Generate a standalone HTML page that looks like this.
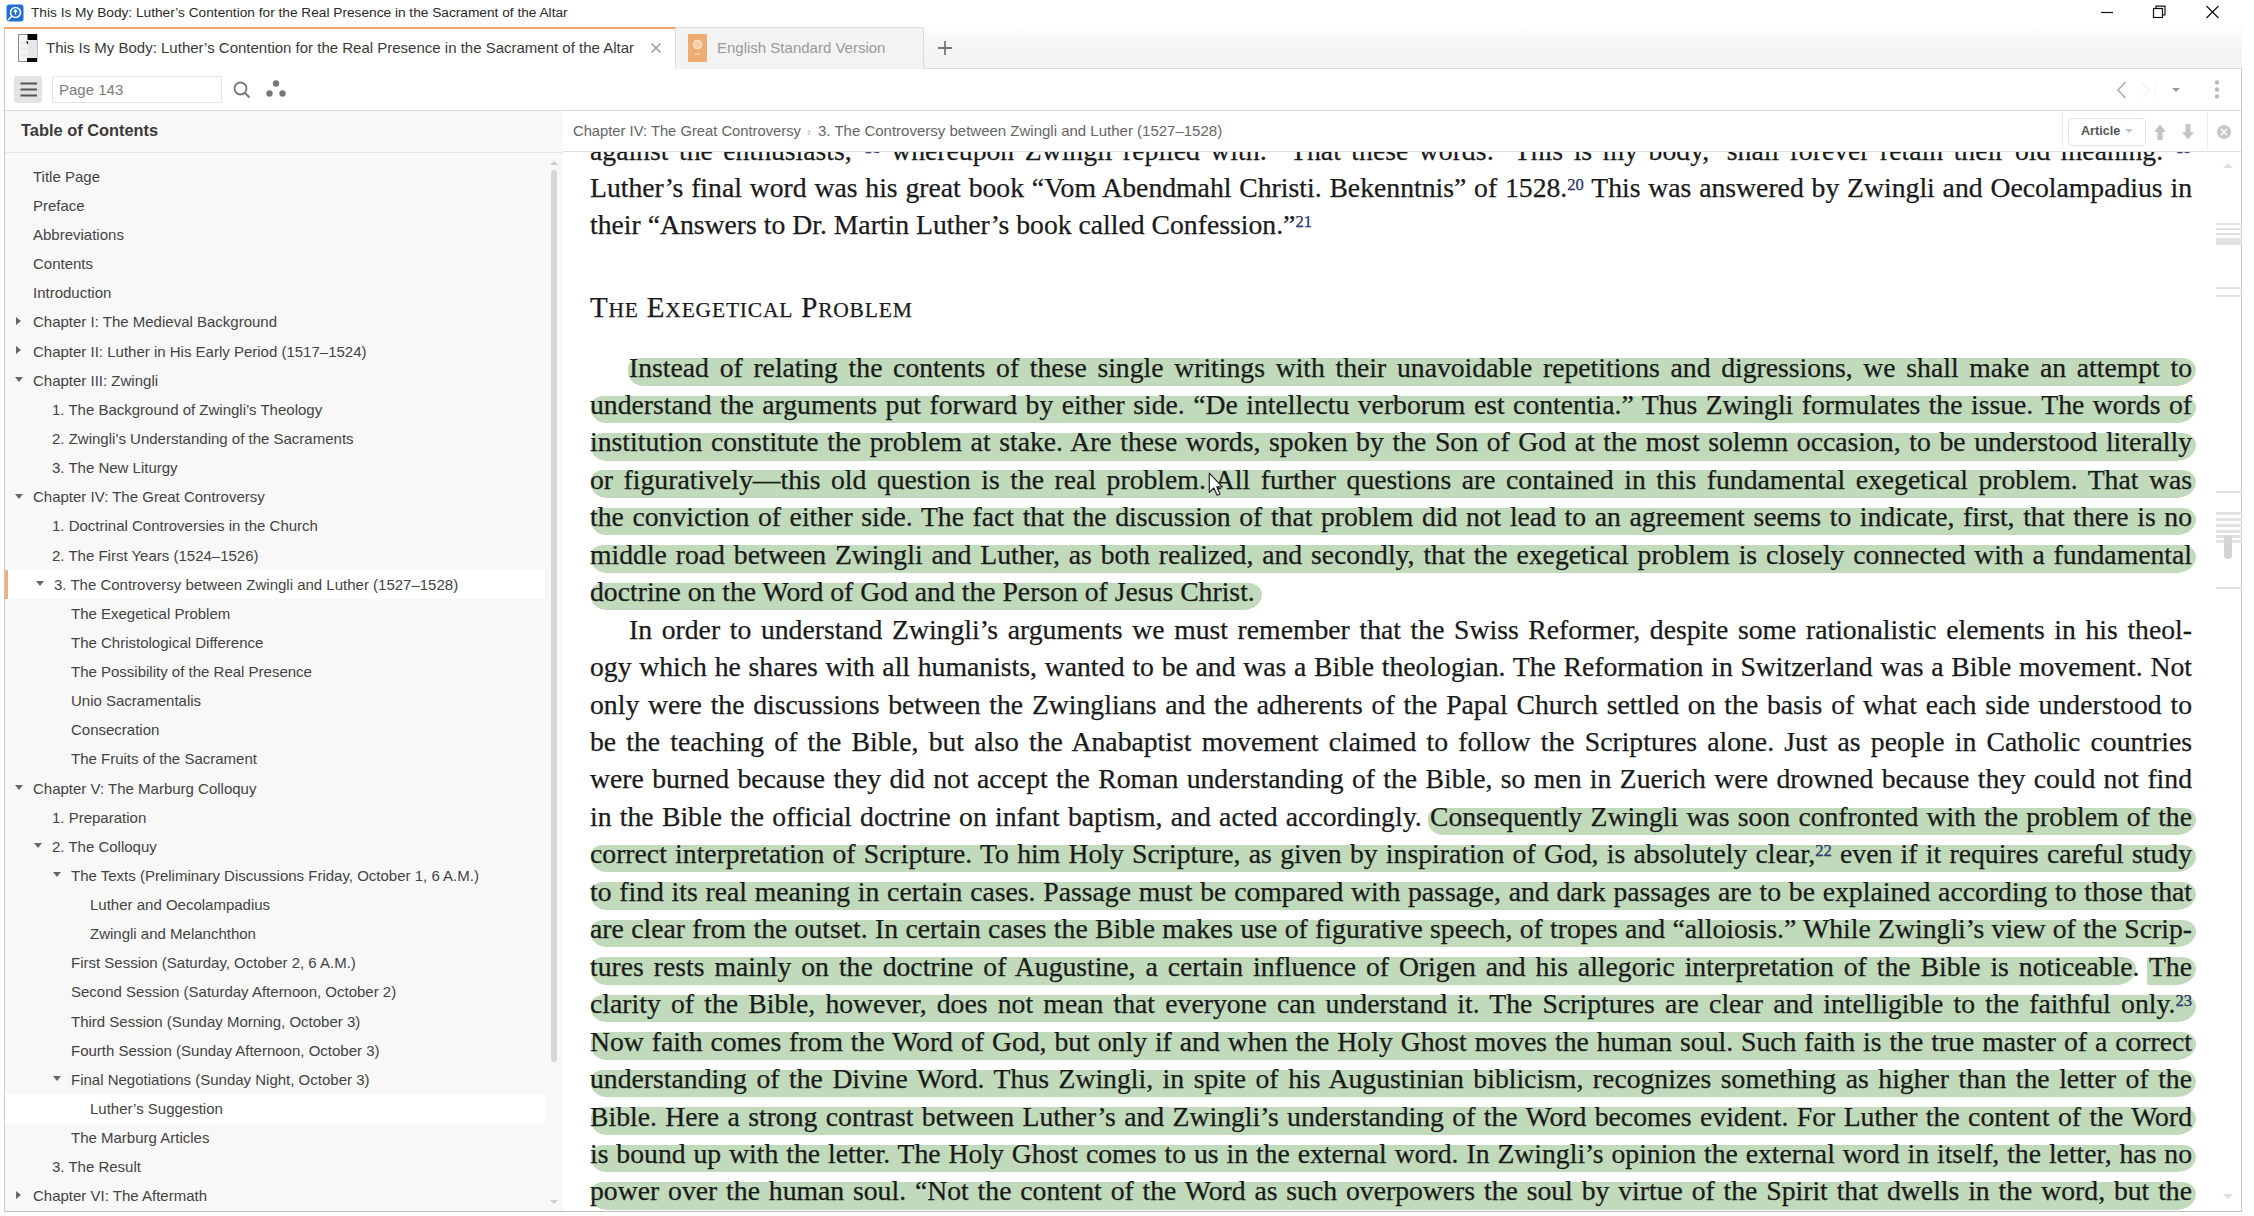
<!DOCTYPE html>
<html><head><meta charset="utf-8">
<style>
*{margin:0;padding:0;box-sizing:border-box}
html,body{width:2254px;height:1216px;overflow:hidden;background:#fff;position:relative;font-family:"Liberation Sans",sans-serif}
.a{position:absolute}
#titlebar{left:0;top:0;width:2254px;height:27px;background:#fff}
#ttl{left:31px;top:4px;font-size:13.7px;color:#2a2a2a;white-space:nowrap;line-height:18px}
#win{left:4px;top:27px;width:2238px;height:1185px;border-left:1px solid #c9c9c9;border-bottom:1px solid #bdbdbd}
#winr{left:2241px;top:68px;width:1px;height:1144px;background:#c9c9c9}
#tabstrip{left:5px;top:14px;width:2237px;height:55px;background:linear-gradient(#fff,#fff 8px,#f5f5f5 30px,#f4f4f4);border-bottom:1px solid #dcdcdc}
#tab1{left:5px;top:27px;width:670px;height:42px;background:#fff;border-top:2px solid #e9a56a}
#tab2{left:675px;top:27px;width:249px;height:42px;background:#f3f3f3;border:1px solid #dcdcdc;border-bottom:none}
.tabtxt{font-size:15px;white-space:nowrap;line-height:20px}
#toolbar{left:5px;top:69px;width:2236px;height:42px;background:#fff;border-bottom:1px solid #dadada}
#toc{left:5px;top:111px;width:558px;height:1100px;background:#f8f8f8}
#tochead{left:5px;top:111px;width:558px;height:42px;border-bottom:1px solid #e6e6e6;background:#f8f8f8}
#main{left:563px;top:111px;width:1678px;height:1100px;background:#fff}
#crumb{left:563px;top:111px;width:1678px;height:41px;background:#fff;border-bottom:1px solid #dedede;z-index:5}
.row{position:absolute;height:29.13px;line-height:29.13px;font-size:15px;color:#434343;white-space:nowrap}
.tri{position:absolute;width:0;height:0}
.tr{border-top:4px solid transparent;border-bottom:4px solid transparent;border-left:5px solid #666}
.td{border-left:4px solid transparent;border-right:4px solid transparent;border-top:5px solid #666}
</style><style>
.ln{position:absolute;font-family:"Liberation Serif",serif;font-size:27.7px;line-height:37.45px;color:#1a1a1a;white-space:nowrap;-webkit-text-stroke:0.25px #1a1a1a}
.ln.j{white-space:normal;text-align:justify;text-align-last:justify;height:37.45px;overflow:visible}
.ln sup{font-size:60%;vertical-align:0;position:relative;top:-0.42em;color:#2b3a8a;line-height:0}
.hd{font-size:29px;line-height:34px;letter-spacing:0.8px}
.hd small{font-size:21.5px}
.hl{position:absolute;height:27.5px;background:#c1dabb;border-radius:12px 14px 20px 16px/10px 12px 16px 14px;filter:blur(0.6px)}
</style></head><body>
<!-- title bar -->
<div class="a" id="titlebar"></div>
<div class="a" id="tabstrip"></div>
<svg class="a" style="left:6px;top:4px" width="18" height="18" viewBox="0 0 18 18"><rect x="0.5" y="0.5" width="17" height="17" rx="3" fill="#1f6fd0"/><circle cx="9.5" cy="8.5" r="5" fill="none" stroke="#fff" stroke-width="1.6"/><path d="M9.5 6 L9.5 10.5 M7.8 7.8 L9.5 6 L11.2 7.8" stroke="#fff" stroke-width="1.3" fill="none"/><path d="M6 12 L2 16" stroke="#fff" stroke-width="1.6"/></svg>
<div class="a" id="ttl">This Is My Body: Luther’s Contention for the Real Presence in the Sacrament of the Altar</div>
<svg class="a" style="left:2095px;top:0px" width="140" height="26" viewBox="0 0 140 26">
<path d="M6 12.5 H18" stroke="#111" stroke-width="1.2"/>
<rect x="58.5" y="8.5" width="9" height="9" fill="#fff" stroke="#111" stroke-width="1.2"/><path d="M61 8.5 V6.2 H70 V15 H67.5" fill="none" stroke="#111" stroke-width="1.2"/>
<path d="M111.5 6 L123.5 18 M123.5 6 L111.5 18" stroke="#111" stroke-width="1.2"/>
</svg>
<div class="a" id="win"></div><div class="a" id="winr"></div>
<!-- tab strip -->
<div class="a" id="tab1"></div>
<div class="a" id="tab2"></div>
<svg class="a" style="left:18px;top:34px" width="20" height="29" viewBox="0 0 20 29"><rect x="0.5" y="0.5" width="18.5" height="27" fill="#f4f4f4" stroke="#8a8a8a" stroke-width="1"/><rect x="9.5" y="6.5" width="9.5" height="17" fill="#e6e6ea"/><rect x="9.5" y="0" width="9.5" height="6" fill="#050505"/><rect x="9" y="24" width="10" height="4" fill="#0a0a0a"/><path d="M9 7 L9.5 10" stroke="#333" stroke-width="1.5"/><path d="M3 9 H9 M3 15 H9 M4 21 H9" stroke="#ddd" stroke-width="0.8"/></svg>
<div class="a tabtxt" style="left:46px;top:38px;color:#3a3a3a">This Is My Body: Luther’s Contention for the Real Presence in the Sacrament of the Altar</div>
<svg class="a" style="left:650px;top:42px" width="12" height="12" viewBox="0 0 12 12"><path d="M1.5 1.5 L10.5 10.5 M10.5 1.5 L1.5 10.5" stroke="#9a9a9a" stroke-width="1.5"/></svg>
<svg class="a" style="left:688px;top:34px" width="19" height="28" viewBox="0 0 19 28"><rect x="0" y="0" width="19" height="28" fill="#efab74"/><circle cx="9.5" cy="10.5" r="4.2" fill="#f6cfa6" stroke="#f8e2bf" stroke-width="1.2"/><path d="M7 20 h5" stroke="#f8d9b2" stroke-width="1.3"/></svg>
<div class="a tabtxt" style="left:717px;top:38px;color:#9a9a9a">English Standard Version</div>
<svg class="a" style="left:937px;top:40px" width="16" height="16" viewBox="0 0 16 16"><path d="M8 1 V15 M1 8 H15" stroke="#777" stroke-width="1.8"/></svg>
<!-- toolbar -->
<div class="a" id="toolbar"></div>
<div class="a" style="left:14px;top:76px;width:28px;height:27px;background:#e3e3e3;border-radius:3px"></div>
<svg class="a" style="left:14px;top:76px" width="28" height="27" viewBox="0 0 28 27"><path d="M6.5 7.5 H23 M6.5 13.5 H23 M6.5 19.5 H23" stroke="#555" stroke-width="2"/></svg>
<div class="a" style="left:52px;top:76px;width:170px;height:27px;border:1px solid #e2e2e2;border-radius:2px;background:#fff"></div>
<div class="a" style="left:59px;top:80px;font-size:15px;line-height:20px;color:#7c7c7c;white-space:nowrap">Page 143</div>
<svg class="a" style="left:230px;top:78px" width="22" height="22" viewBox="0 0 22 22"><circle cx="10.5" cy="10.5" r="6" fill="none" stroke="#777" stroke-width="1.8"/><path d="M14.8 14.8 L19.5 19.5" stroke="#777" stroke-width="2"/></svg>
<svg class="a" style="left:264px;top:78px" width="24" height="22" viewBox="0 0 24 22"><circle cx="12" cy="5.5" r="3.2" fill="#777"/><circle cx="5.5" cy="15.5" r="3.2" fill="#777"/><circle cx="18.5" cy="15.5" r="3.2" fill="#777"/></svg>
<svg class="a" style="left:2110px;top:76px" width="120" height="28" viewBox="0 0 120 28"><path d="M15.5 6 L8 14 L15.5 22" fill="none" stroke="#aaa" stroke-width="1.5"/><path d="M62 12 L70 12 L66 16 Z" fill="#999"/><circle cx="107" cy="6.5" r="2.2" fill="#bbb"/><circle cx="107" cy="13.5" r="2.2" fill="#bbb"/><circle cx="107" cy="20.5" r="2.2" fill="#bbb"/></svg>
<!-- TOC panel -->
<div class="a" id="toc"></div>
<div class="a" id="tochead"></div>
<div class="a" style="left:21px;top:119px;font-size:16.4px;font-weight:bold;color:#3a3a3a;line-height:22px;white-space:nowrap">Table of Contents</div>
<div class="row" style="left:33px;top:161.83px">Title Page</div>
<div class="row" style="left:33px;top:190.96px">Preface</div>
<div class="row" style="left:33px;top:220.09px">Abbreviations</div>
<div class="row" style="left:33px;top:249.22px">Contents</div>
<div class="row" style="left:33px;top:278.35px">Introduction</div>
<div class="row" style="left:33px;top:307.48px">Chapter I: The Medieval Background</div>
<div class="tri tr" style="left:16px;top:317.25px"></div>
<div class="row" style="left:33px;top:336.61px">Chapter II: Luther in His Early Period (1517–1524)</div>
<div class="tri tr" style="left:16px;top:346.38px"></div>
<div class="row" style="left:33px;top:365.74px">Chapter III: Zwingli</div>
<div class="tri td" style="left:15px;top:377.01px"></div>
<div class="row" style="left:52px;top:394.87px">1. The Background of Zwingli’s Theology</div>
<div class="row" style="left:52px;top:424.00px">2. Zwingli’s Understanding of the Sacraments</div>
<div class="row" style="left:52px;top:453.13px">3. The New Liturgy</div>
<div class="row" style="left:33px;top:482.26px">Chapter IV: The Great Controversy</div>
<div class="tri td" style="left:15px;top:493.53px"></div>
<div class="row" style="left:52px;top:511.39px">1. Doctrinal Controversies in the Church</div>
<div class="row" style="left:52px;top:540.52px">2. The First Years (1524–1526)</div>
<div class="a" style="left:5px;top:569.65px;width:540px;height:29.13px;background:#fff"></div>
<div class="a" style="left:5px;top:569.65px;width:3px;height:29.13px;background:#eeb07a"></div>
<div class="row" style="left:54px;top:569.65px">3. The Controversy between Zwingli and Luther (1527–1528)</div>
<div class="tri td" style="left:36px;top:580.92px"></div>
<div class="row" style="left:71px;top:598.78px">The Exegetical Problem</div>
<div class="row" style="left:71px;top:627.91px">The Christological Difference</div>
<div class="row" style="left:71px;top:657.04px">The Possibility of the Real Presence</div>
<div class="row" style="left:71px;top:686.17px">Unio Sacramentalis</div>
<div class="row" style="left:71px;top:715.30px">Consecration</div>
<div class="row" style="left:71px;top:744.43px">The Fruits of the Sacrament</div>
<div class="row" style="left:33px;top:773.56px">Chapter V: The Marburg Colloquy</div>
<div class="tri td" style="left:15px;top:784.83px"></div>
<div class="row" style="left:52px;top:802.69px">1. Preparation</div>
<div class="row" style="left:52px;top:831.82px">2. The Colloquy</div>
<div class="tri td" style="left:34px;top:843.09px"></div>
<div class="row" style="left:71px;top:860.95px">The Texts (Preliminary Discussions Friday, October 1, 6 A.M.)</div>
<div class="tri td" style="left:53px;top:872.22px"></div>
<div class="row" style="left:90px;top:890.08px">Luther and Oecolampadius</div>
<div class="row" style="left:90px;top:919.21px">Zwingli and Melanchthon</div>
<div class="row" style="left:71px;top:948.34px">First Session (Saturday, October 2, 6 A.M.)</div>
<div class="row" style="left:71px;top:977.47px">Second Session (Saturday Afternoon, October 2)</div>
<div class="row" style="left:71px;top:1006.60px">Third Session (Sunday Morning, October 3)</div>
<div class="row" style="left:71px;top:1035.73px">Fourth Session (Sunday Afternoon, October 3)</div>
<div class="row" style="left:71px;top:1064.86px">Final Negotiations (Sunday Night, October 3)</div>
<div class="tri td" style="left:53px;top:1076.13px"></div>
<div class="a" style="left:5px;top:1093.99px;width:540px;height:29.13px;background:#fff"></div>
<div class="row" style="left:90px;top:1093.99px">Luther’s Suggestion</div>
<div class="row" style="left:71px;top:1123.12px">The Marburg Articles</div>
<div class="row" style="left:52px;top:1152.25px">3. The Result</div>
<div class="row" style="left:33px;top:1181.38px">Chapter VI: The Aftermath</div>
<div class="tri tr" style="left:16px;top:1191.15px"></div>
<div class="a" style="left:551px;top:170px;width:6px;height:892px;background:#d6d6d6;border-radius:3px"></div>
<svg class="a" style="left:549px;top:160px" width="10" height="6"><path d="M1 5 L5 1 L9 5Z" fill="#ccc"/></svg>
<svg class="a" style="left:549px;top:1199px" width="10" height="6"><path d="M1 1 L5 5 L9 1Z" fill="#ccc"/></svg>
<!-- main -->
<div class="a" id="main"></div>
<div class="a" id="crumb"></div>
<div class="a" style="left:573px;top:121px;font-size:14.75px;line-height:20px;color:#666;white-space:nowrap;z-index:6">Chapter IV: The Great Controversy</div>
<div class="a" style="left:807px;top:122px;font-size:12px;line-height:20px;color:#b0b0b0;white-space:nowrap;z-index:6">›</div>
<div class="a" style="left:818px;top:121px;font-size:15px;line-height:20px;color:#666;white-space:nowrap;z-index:6">3. The Controversy between Zwingli and Luther (1527–1528)</div>
<div class="a" style="left:2062px;top:112px;width:1px;height:37px;background:#ececec;z-index:6"></div>
<div class="a" style="left:2068px;top:118px;width:78px;height:28px;border:1px solid #e3e3e3;border-radius:4px;background:#fff;z-index:6"></div>
<div class="a" style="left:2081px;top:122px;font-size:12.6px;font-weight:bold;line-height:18px;color:#555;white-space:nowrap;z-index:6">Article</div>
<svg class="a" style="left:2124px;top:128px;z-index:6" width="10" height="6"><path d="M1 1 L9 1 L5 5Z" fill="#c4c4c4"/></svg>
<svg class="a" style="left:2152px;top:123px;z-index:6" width="16" height="18" viewBox="0 0 16 18"><path d="M8 1.5 L14 9 L10.5 9 L10.5 17 L5.5 17 L5.5 9 L2 9 Z" fill="#c4c4c4"/></svg>
<svg class="a" style="left:2180px;top:123px;z-index:6" width="16" height="18" viewBox="0 0 16 18"><path d="M8 16.5 L14 9 L10.5 9 L10.5 1 L5.5 1 L5.5 9 L2 9 Z" fill="#c4c4c4"/></svg>
<div class="a" style="left:2207px;top:112px;width:1px;height:37px;background:#ececec;z-index:6"></div>
<svg class="a" style="left:2216px;top:124px;z-index:6" width="16" height="16" viewBox="0 0 16 16"><circle cx="8" cy="8" r="7" fill="#c8c8c8"/><path d="M5 5 L11 11 M11 5 L5 11" stroke="#fff" stroke-width="1.5"/></svg>
<svg class="a" style="left:2214px;top:156px;z-index:6" width="28" height="1050" viewBox="0 0 28 1050">
<path d="M9 12 L14 7 L19 12Z" fill="#e0e0e0"/>
<g fill="#e2e2e2"><rect x="2" y="67" width="26" height="2"/><rect x="2" y="72" width="26" height="2"/><rect x="2" y="77" width="26" height="2"/><rect x="2" y="82" width="26" height="7"/>
<rect x="2" y="131" width="26" height="2"/><rect x="2" y="139" width="26" height="2"/>
<rect x="2" y="335" width="26" height="2"/>
<rect x="2" y="356" width="26" height="3"/><rect x="2" y="362" width="26" height="3"/><rect x="2" y="368" width="26" height="3"/><rect x="2" y="374" width="26" height="3"/><rect x="2" y="379" width="26" height="3"/><rect x="2" y="384" width="26" height="3"/>
<rect x="2" y="431" width="26" height="2"/></g>
<rect x="10" y="379" width="8" height="24" rx="4" fill="#d4d4d4"/>
<path d="M9 1038 L19 1038 L14 1043Z" fill="#e0e0e0"/>
</svg>
<svg class="a" style="left:2138px;top:80px" width="24" height="20" viewBox="0 0 24 20"><path d="M4 3 L12 10 L4 17" fill="none" stroke="#f8f8f8" stroke-width="3"/><path d="M17 2 V18" stroke="#f9f9f9" stroke-width="2"/></svg>
<div class="a" id="content" style="left:563px;top:152px;width:1650px;height:1059px;overflow:hidden">
<div class="a" style="left:0;top:0;width:1650px;height:1059px">
<div class="hl" style="left:65px;top:206.10px;width:1568px"></div>
<div class="hl" style="left:28px;top:243.55px;width:1605px"></div>
<div class="hl" style="left:28px;top:281.00px;width:1605px"></div>
<div class="hl" style="left:28px;top:318.45px;width:1605px"></div>
<div class="hl" style="left:28px;top:355.90px;width:1605px"></div>
<div class="hl" style="left:28px;top:393.35px;width:1605px"></div>
<div class="hl" style="left:28px;top:430.80px;width:671px"></div>
<div class="hl" style="left:865px;top:655.50px;width:768px"></div>
<div class="hl" style="left:28px;top:692.95px;width:1605px"></div>
<div class="hl" style="left:28px;top:730.40px;width:1605px"></div>
<div class="hl" style="left:28px;top:767.85px;width:1605px"></div>
<div class="hl" style="left:28px;top:805.30px;width:1545px"></div>
<div class="hl" style="left:1584px;top:805.30px;width:49px;border-radius:2px 14px 20px 2px/2px 12px 16px 2px"></div>
<div class="hl" style="left:28px;top:842.75px;width:1605px"></div>
<div class="hl" style="left:28px;top:880.20px;width:1605px"></div>
<div class="hl" style="left:28px;top:917.65px;width:1605px"></div>
<div class="hl" style="left:28px;top:955.10px;width:1605px"></div>
<div class="hl" style="left:28px;top:992.55px;width:1605px"></div>
<div class="hl" style="left:28px;top:1030.00px;width:1605px"></div>
<div class="ln j" style="top:-19.57px;left:27px;width:1602px">against the enthusiasts,”<sup>18</sup> whereupon Zwingli replied with: “That these words: ‘This is my body,’ shall forever retain their old meaning.”<sup>19</sup></div>
<div class="ln j" style="top:17.43px;left:27px;width:1602px">Luther’s final word was his great book “Vom Abendmahl Christi. Bekenntnis” of 1528.<sup>20</sup> This was answered by Zwingli and Oecolampadius in</div>
<div class="ln" style="top:54.43px;left:27px;width:1602px">their “Answers to Dr. Martin Luther’s book called Confession.”<sup>21</sup></div>
<div class="ln hd" style="top:137.81px;left:27px">T<small>HE</small> E<small>XEGETICAL</small> P<small>ROBLEM</small></div>
<div class="ln j" style="top:196.53px;left:66px;width:1563px">Instead of relating the contents of these single writings with their unavoidable repetitions and digressions, we shall make an attempt to</div>
<div class="ln j" style="top:233.98px;left:27px;width:1602px">understand the arguments put forward by either side. “De intellectu verborum est contentia.” Thus Zwingli formulates the issue. The words of</div>
<div class="ln j" style="top:271.43px;left:27px;width:1602px">institution constitute the problem at stake. Are these words, spoken by the Son of God at the most solemn occasion, to be understood literally</div>
<div class="ln j" style="top:308.88px;left:27px;width:1602px">or figuratively—this old question is the real problem. All further questions are contained in this fundamental exegetical problem. That was</div>
<div class="ln j" style="top:346.33px;left:27px;width:1602px">the conviction of either side. The fact that the discussion of that problem did not lead to an agreement seems to indicate, first, that there is no</div>
<div class="ln j" style="top:383.78px;left:27px;width:1602px">middle road between Zwingli and Luther, as both realized, and secondly, that the exegetical problem is closely connected with a fundamental</div>
<div class="ln" style="top:421.23px;left:27px;width:1602px">doctrine on the Word of God and the Person of Jesus Christ.</div>
<div class="ln j" style="top:458.68px;left:66px;width:1563px">In order to understand Zwingli’s arguments we must remember that the Swiss Reformer, despite some rationalistic elements in his theol-</div>
<div class="ln j" style="top:496.13px;left:27px;width:1602px">ogy which he shares with all humanists, wanted to be and was a Bible theologian. The Reformation in Switzerland was a Bible movement. Not</div>
<div class="ln j" style="top:533.58px;left:27px;width:1602px">only were the discussions between the Zwinglians and the adherents of the Papal Church settled on the basis of what each side understood to</div>
<div class="ln j" style="top:571.03px;left:27px;width:1602px">be the teaching of the Bible, but also the Anabaptist movement claimed to follow the Scriptures alone. Just as people in Catholic countries</div>
<div class="ln j" style="top:608.48px;left:27px;width:1602px">were burned because they did not accept the Roman understanding of the Bible, so men in Zuerich were drowned because they could not find</div>
<div class="ln j" style="top:645.93px;left:27px;width:1602px">in the Bible the official doctrine on infant baptism, and acted accordingly. Consequently Zwingli was soon confronted with the problem of the</div>
<div class="ln j" style="top:683.38px;left:27px;width:1602px">correct interpretation of Scripture. To him Holy Scripture, as given by inspiration of God, is absolutely clear,<sup>22</sup> even if it requires careful study</div>
<div class="ln j" style="top:720.83px;left:27px;width:1602px">to find its real meaning in certain cases. Passage must be compared with passage, and dark passages are to be explained according to those that</div>
<div class="ln j" style="top:758.28px;left:27px;width:1602px">are clear from the outset. In certain cases the Bible makes use of figurative speech, of tropes and “alloiosis.” While Zwingli’s view of the Scrip-</div>
<div class="ln j" style="top:795.73px;left:27px;width:1602px">tures rests mainly on the doctrine of Augustine, a certain influence of Origen and his allegoric interpretation of the Bible is noticeable. The</div>
<div class="ln j" style="top:833.18px;left:27px;width:1602px">clarity of the Bible, however, does not mean that everyone can understand it. The Scriptures are clear and intelligible to the faithful only.<sup>23</sup></div>
<div class="ln j" style="top:870.63px;left:27px;width:1602px">Now faith comes from the Word of God, but only if and when the Holy Ghost moves the human soul. Such faith is the true master of a correct</div>
<div class="ln j" style="top:908.08px;left:27px;width:1602px">understanding of the Divine Word. Thus Zwingli, in spite of his Augustinian biblicism, recognizes something as higher than the letter of the</div>
<div class="ln j" style="top:945.53px;left:27px;width:1602px">Bible. Here a strong contrast between Luther’s and Zwingli’s understanding of the Word becomes evident. For Luther the content of the Word</div>
<div class="ln j" style="top:982.98px;left:27px;width:1602px">is bound up with the letter. The Holy Ghost comes to us in the external word. In Zwingli’s opinion the external word in itself, the letter, has no</div>
<div class="ln j" style="top:1020.43px;left:27px;width:1602px">power over the human soul. “Not the content of the Word as such overpowers the soul by virtue of the Spirit that dwells in the word, but the</div>
</div></div>
<svg class="a" style="left:1207px;top:471px;z-index:9" width="18" height="26" viewBox="0 0 18 26"><path d="M2.3 2.2 L2.3 21.5 L6.8 17 L10.2 24.2 L13 23 L9.8 15.8 L15.3 15.8 Z" fill="#fff" stroke="#222" stroke-width="1.2" stroke-linejoin="round"/></svg>
</body></html>
